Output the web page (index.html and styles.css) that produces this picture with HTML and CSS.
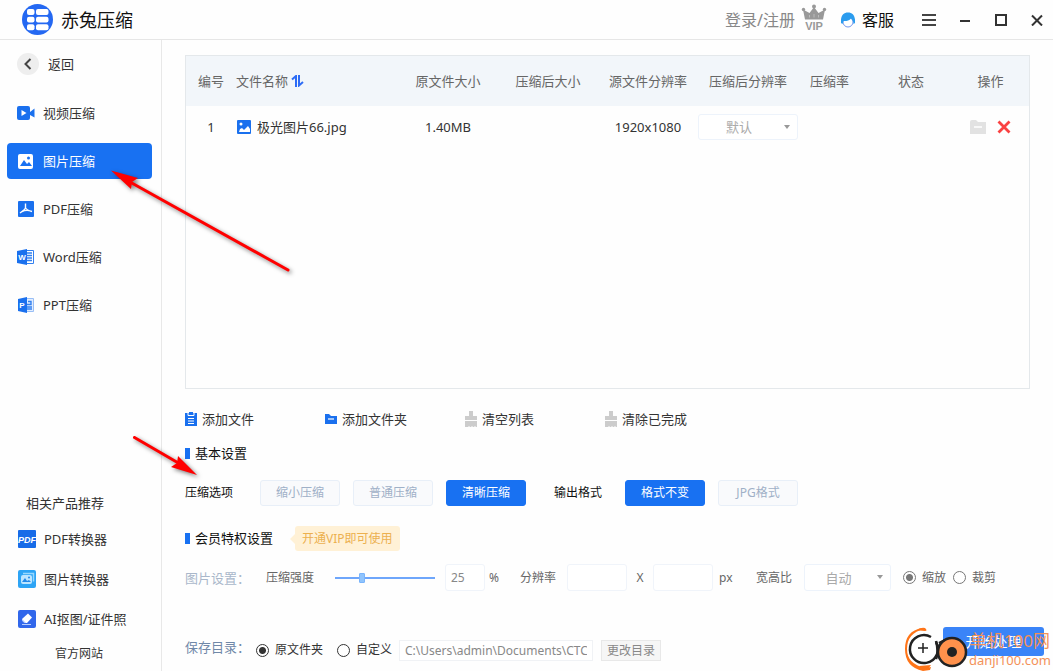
FILE: index.html
```html
<!DOCTYPE html>
<html lang="zh-CN">
<head>
<meta charset="utf-8">
<title>赤兔压缩</title>
<link rel="stylesheet" href="styles.css">
</head>
<body>
<header class="titlebar">
  <svg class="brand-logo" viewBox="0 0 31 31" aria-hidden="true">
    <circle cx="15.500" cy="15.500" r="15.500" fill="#2468f2"/>
    <g fill="#fff"><rect x="5" y="5" width="7.500" height="6" rx="2"/><rect x="14" y="5" width="12.500" height="6" rx="2"/><rect x="5" y="12.800" width="7.500" height="5.700" rx="2"/><rect x="14" y="12.800" width="12.500" height="5.700" rx="2"/><rect x="5" y="20.300" width="7.500" height="6" rx="2"/><rect x="14" y="20.300" width="12.500" height="6" rx="2"/></g>
  </svg>
  <h1 class="brand-name">赤兔压缩</h1>
  <a class="login" href="#">登录/注册</a>
  <svg class="vip-crown" viewBox="0 0 26 26" aria-label="VIP">
    <path d="M2 5.500 4 15.500H22L24 5.500 17.500 9 13 3 8.500 9Z" fill="#999"/>
    <circle cx="13" cy="2.500" r="2" fill="#999"/><circle cx="2.500" cy="5.500" r="1.700" fill="#999"/><circle cx="23.500" cy="5.500" r="1.700" fill="#999"/>
    <path d="M8.500 13.500V11M13 13.500V10M17.500 13.500V11" stroke="#bbb"/>
    <text x="13" y="26" text-anchor="middle" class="vip-text">VIP</text>
  </svg>
  <a class="service" href="#">
    <svg viewBox="0 0 16 16" width="16" height="16" aria-hidden="true"><circle cx="8" cy="10" r="5" fill="#fff" stroke="#7396ed"/><path d="M1 11V7.500C1.500 3 4 .5 8 .5s6.500 2.500 7 7V11l-1.500 1C13.500 9.500 12.500 8 11 6.500 9 9.500 5 9 3.500 9L2.500 12Z" fill="#2b9cee"/></svg>
    客服
  </a>
  <button class="win win-menu" aria-label="菜单"><svg viewBox="0 0 16 14" width="16" height="14"><path d="M1 2H15M1 7H15M1 12H15" stroke="#444" stroke-width="2"/></svg></button>
  <button class="win" aria-label="最小化"><svg viewBox="0 0 12 12" width="12" height="12"><path d="M1 7H11" stroke="#333" stroke-width="2"/></svg></button>
  <button class="win" aria-label="最大化"><svg viewBox="0 0 12 12" width="12" height="12"><path d="M1 1H11V11H1Z" fill="none" stroke="#333" stroke-width="2"/></svg></button>
  <button class="win" aria-label="关闭"><svg viewBox="0 0 12 12" width="12" height="12"><path d="M1 1.500 11 11.500M11 1.500 1 11.500" stroke="#333" stroke-width="2"/></svg></button>
</header>

<div class="body">
  <aside class="sidebar">
    <button class="back"><svg viewBox="0 0 22 22" width="22" height="22"><circle cx="11" cy="11" r="11" fill="#eee"/><path d="m13.500 6-5 5 5 5" fill="none" stroke="#444" stroke-width="2"/></svg>返回</button>
    <nav class="menu">
      <a class="menu-item" href="#"><svg viewBox="0 0 18 18" width="18" height="18"><rect y="2" width="13" height="14" rx="2" fill="#1a70ee"/><path d="m13 8 4.500-3.500v9L13 11Z" fill="#1a70ee"/><path d="m4.500 6 5 3-5 3Z" fill="#fff"/></svg>视频压缩</a>
      <a class="menu-item active" href="#"><svg viewBox="0 0 18 18" width="18" height="18"><rect x="1" y="2" width="15" height="15" rx="2" fill="#fff"/><path d="m3 14 4-6 3 4 2-2 3 4Z" fill="#1871f2"/><circle cx="11.500" cy="6" r="1.500" fill="#1871f2"/></svg>图片压缩</a>
      <a class="menu-item" href="#"><svg viewBox="0 0 18 18" width="18" height="18"><rect x="1" y="1" width="16" height="16" rx="1" fill="#1a70ee"/><path d="M8.500 3.500v4q0 2-5.500 5.500M8.500 8q1 2 6.500 3.500M5 11.500q3-1.500 7-1" fill="none" stroke="#fff" stroke-width="1.400"/></svg>PDF压缩</a>
      <a class="menu-item" href="#"><svg viewBox="0 0 18 18" width="18" height="18"><path d="M9 2.500h7.500v13H9" fill="#fff" stroke="#3380ef"/><path d="M10 5h5M10 7.500h5M10 10h5M10 12.500h5" stroke="#3380ef" stroke-width="1.300"/><path d="m0 3 10-2v16L0 15Z" fill="#1a70ee"/><text x="5" y="12" text-anchor="middle" class="doc-letter">W</text></svg>Word压缩</a>
      <a class="menu-item" href="#"><svg viewBox="0 0 18 18" width="18" height="18"><path d="M9 2.500h7.500v13H9" fill="#e1edff" stroke="#99bef5"/><path d="M11 5.500h3v3h-4M10 11h5M10 13h5" fill="none" stroke="#3380ef" stroke-width="1.400"/><path d="m1 3 9-2v16l-9-2Z" fill="#1a70ee"/><text x="5" y="12" text-anchor="middle" class="doc-letter">P</text></svg>PPT压缩</a>
    </nav>
    <section class="related">
      <h2>相关产品推荐</h2>
      <a href="#"><svg viewBox="0 0 18 18" width="18" height="18"><rect width="18" height="18" rx="1" fill="#176be8"/><text x="9" y="13" text-anchor="middle" class="pdf-letter">PDF</text></svg>PDF转换器</a>
      <a href="#"><svg viewBox="0 0 18 18" width="18" height="18"><rect width="18" height="18" rx="2" fill="#2da4f5"/><path d="M5 3.500h10.500v8" fill="none" stroke="#98d8ff" stroke-width="1.500"/><rect x="3" y="5" width="11" height="9" rx="2" fill="#bce5ff"/><path d="m4 12 3-4 2 3 2-1 2 2Z" fill="#2389e8"/><circle cx="11" cy="7.500" r="1" fill="#2389e8"/></svg>图片转换器</a>
      <a href="#"><svg viewBox="0 0 18 18" width="18" height="18"><rect width="18" height="18" rx="2" fill="#3167eb"/><path d="m4 9 6-5.500 4 4L9 13H6.500L4 10.500Z" fill="#fff"/><path d="m4 9 4 4H6.500L4 10.500Z" fill="#a9c5ff"/><path d="M4 14.500h9" stroke="#b8cefd"/></svg>AI抠图/证件照</a>
      <a class="website" href="#">官方网站</a>
    </section>
  </aside>

  <main class="main">
    <div class="file-box">
      <table class="files">
        <colgroup><col class="c-no"><col><col class="c-mid"><col class="c-mid"><col class="c-mid"><col class="c-mid"><col class="c-rate"><col class="c-mid"><col class="c-act"></colgroup>
        <thead><tr><th>编号</th><th class="name">文件名称 <svg viewBox="0 0 13 12" width="13" height="12"><path d="M1 4.500 5 1V12M8 0V10.500L12 7" fill="none" stroke="#2d6cf6" stroke-width="2"/></svg></th><th>原文件大小</th><th>压缩后大小</th><th>源文件分辨率</th><th>压缩后分辨率</th><th>压缩率</th><th>状态</th><th class="actions">操作</th></tr></thead>
        <tbody><tr><td>1</td><td class="name"><span class="file-name"><svg viewBox="0 0 16 16" width="16" height="16"><rect x="1" y="1" width="14" height="14" rx="1" fill="#1a70ee"/><path d="m3 13 1-3 2-1 2 2 4-4 2 3v3Z" fill="#fff"/><circle cx="5" cy="5" r="1.500" fill="#fff"/></svg>极光图片66.jpg</span></td><td>1.40MB</td><td></td><td>1920x1080</td><td><span class="select"><select aria-label="压缩后分辨率"><option>默认</option></select></span></td><td></td><td></td>
          <td class="actions"><span class="action-list"><button aria-label="打开文件夹"><svg viewBox="0 0 16 16" width="16" height="16"><path d="M0 3q0-2 2-2h4l2 2h8v12H0Z" fill="#e2e2e2"/><path d="M4 8h8" stroke="#fff" stroke-width="1.500"/></svg></button><button aria-label="删除"><svg viewBox="0 0 14 14" width="14" height="14"><path d="m1.500 1.500 11 11M12.500 1.500l-11 11" stroke="#fa4141" stroke-width="2.800"/></svg></button></span></td></tr></tbody>
      </table>
    </div>

    <div class="toolbar">
      <button><svg viewBox="0 0 12 14" width="12" height="14"><path d="M0 1h12v13H0Z" fill="#1a70ee"/><path d="M3 1v2.500h6V1" fill="none" stroke="#fff"/><path d="M4 0h4v2.500H4Z" fill="#1a70ee"/><path d="M3 6.500h6M3 9h6M3 11.500h6" stroke="#fff"/></svg>添加文件</button>
      <button><svg viewBox="0 0 12 14" width="12" height="14"><path d="M0 2h4l2 2h6v8H0Z" fill="#1a70ee"/><path d="M3 7h6" stroke="#fff" stroke-width="1.200"/></svg>添加文件夹</button>
      <button><svg viewBox="0 0 12 16" width="12" height="16"><path d="M4 0h4v5h4v4H0V5h4ZM0 10h12v6h-1l-1-1-1 1H8l-1-1-1 1H5l-1-1-1 1H0Z" fill="#ccc"/></svg>清空列表</button>
      <button><svg viewBox="0 0 12 16" width="12" height="16"><path d="M4 0h4v5h4v4H0V5h4ZM0 10h12v6h-1l-1-1-1 1H8l-1-1-1 1H5l-1-1-1 1H0Z" fill="#ccc"/></svg>清除已完成</button>
    </div>

    <h2 class="section-title">基本设置</h2>
    <div class="options">
      <span class="option-label">压缩选项</span>
      <div class="choices"><button class="choice">缩小压缩</button><button class="choice">普通压缩</button><button class="choice on">清晰压缩</button></div>
      <span class="option-label format-label">输出格式</span>
      <div class="choices"><button class="choice on">格式不变</button><button class="choice">JPG格式</button></div>
    </div>

    <div class="vip-heading"><h2 class="section-title">会员特权设置</h2><a class="vip-tip" href="#">开通VIP即可使用</a></div>
    <div class="settings">
      <span class="row-label faded">图片设置：</span>
      <label class="strength" for="strength">压缩强度</label>
      <input class="slider" id="strength" type="range" min="0" max="100" value="25">
      <input class="box percent" type="text" value="25" aria-label="压缩强度百分比"><span class="unit">%</span>
      <label class="resolution" for="res-w">分辨率</label>
      <input class="box size" id="res-w" type="text"><span class="times">X</span>
      <input class="box size" type="text" aria-label="高度"><span class="unit">px</span>
      <label class="ratio" for="ratio">宽高比</label>
      <span class="select ratio-select"><select id="ratio"><option>自动</option></select></span>
      <div class="radios"><label><input type="radio" name="fit" checked>缩放</label><label><input type="radio" name="fit">裁剪</label></div>
    </div>

    <div class="save">
      <span class="row-label">保存目录：</span>
      <div class="radios save-radios"><label><input type="radio" name="dir" checked>原文件夹</label><label><input type="radio" name="dir">自定义</label></div>
      <input class="path" type="text" value="C:\Users\admin\Documents\CTCompress" aria-label="保存目录" readonly>
      <button class="change">更改目录</button>
      <button class="start">开始处理</button>
    </div>
  </main>
</div>

<svg class="pointer pointer-menu" viewBox="0 0 200 120" aria-hidden="true"><path d="M30 22 188 110" stroke="red" stroke-width="3" stroke-linecap="round"/><path d="m11 10.500 27 7.500-6 4-1 7Z" fill="red"/></svg>
<svg class="pointer pointer-options" viewBox="0 0 90 60" aria-hidden="true"><path d="m14.500 12.500 43 25" stroke="red" stroke-width="3" stroke-linecap="round"/><path d="m77 50-26-8 6-4 1-7Z" fill="red"/></svg>
<div class="watermark">
  <svg viewBox="0 0 64 44" width="64" height="44" aria-hidden="true">
    <path d="M19 2Q2 6 2 22q0 15 18 19l6-1-1 3-7 1Q0 40 0 22 0 4 17 1Z" fill="#ff7417"/><path d="M11 4q4-4 9-3 3 3 0 3-6-1-9 0M14 39q4 5 9 3l3-4Z" fill="#ff7417"/>
    <circle cx="18" cy="21" r="14" fill="#fff"/><path d="M26 10A14 14 0 1 0 31 15" fill="none" stroke="#222" stroke-width="2.500"/><path d="M18 16v10M13 21h10" stroke="#222" stroke-width="1.500"/>
    <circle cx="47" cy="25" r="14" fill="#ff914c" stroke="#222" stroke-width="2.500"/><circle cx="47" cy="25" r="5" fill="#222"/><path d="M31 14q3 11 0 18M34 16l6-3" fill="none" stroke="#222" stroke-width="2.500"/>
  </svg>
  <div class="watermark-text"><span class="wm-name">单机100网</span><span class="wm-url">danji100.com</span></div>
</div>
</body>
</html>
```
FILE: styles.css
```css
* { box-sizing: border-box; }
body {
  margin: 0;
  min-height: 100vh;
  display: flex;
  flex-direction: column;
  position: relative;
  overflow-x: hidden;
  background: #fefefe;
  color: #333;
  font: 13px/20px "Noto Sans", "Noto Sans CJK SC", sans-serif;
}
h1, h2 { margin: 0; font-weight: 400; }
a { color: inherit; text-decoration: none; }
button, input, select { font: inherit; color: inherit; margin: 0; }
button { padding: 0; border: 0; background: none; white-space: nowrap; }
svg { flex: none; }

.titlebar { height: 40px; padding: 0 10px 0 22px; display: flex; align-items: center; border-bottom: 1px solid #e6e6e6; }
.brand-logo { width: 31px; height: 31px; }
.brand-name { margin-left: 8px; font-size: 18px; color: #111; }
.login { margin-left: auto; font-size: 16px; color: #888; }
.vip-crown { width: 26px; height: 26px; margin: 0 13px 6px 6px; }
.vip-text { font: 700 11px "Liberation Sans", sans-serif; fill: #999; }
.service { display: flex; align-items: center; gap: 6px; margin-right: 27px; font-size: 16px; color: #111; }
.win { display: flex; margin-left: 24px; }
.win-menu { margin: 0; }
.win-menu + .win { margin-left: 22px; }

.body { flex: 1; display: flex; }
.sidebar { width: 162px; flex: none; padding: 13px 9px 2px 7px; display: flex; flex-direction: column; border-right: 1px solid #e8e8e8; }
.back { display: flex; align-items: center; gap: 9px; margin: 0 0 20px 10px; }
.menu { display: grid; gap: 12px; }
.menu-item { height: 36px; padding-left: 10px; display: flex; align-items: center; gap: 8px; border-radius: 4px; }
.menu-item.active { background: #1871f2; color: #fff; }
.doc-letter { font: 700 8px "Liberation Sans", sans-serif; fill: #fff; }
.pdf-letter { font: italic 700 9px "Liberation Sans", sans-serif; fill: #fff; }
.related { margin-top: auto; padding-left: 11px; }
.related h2 { padding-left: 8px; font-size: 13px; line-height: 32px; }
.related a { height: 40px; display: flex; align-items: center; gap: 8px; }
.related .website { height: 30px; padding-left: 37px; font-size: 12px; }

.main { flex: 1; min-width: 0; padding: 15px 9px 10px 23px; display: flex; flex-direction: column; }
.file-box { flex: 1; margin-right: 14px; border: 1px solid #e4e8eb; }
.files { width: 100%; table-layout: fixed; border-collapse: collapse; text-align: center; }
.c-no { width: 50px; }
.c-mid { width: 100px; }
.c-rate { width: 63px; }
.c-act { width: 68px; }
.files th { height: 50px; padding: 0; background: #f2f6fa; font-weight: 400; color: #666; }
.files td { height: 41px; padding: 0; }
.files .name { text-align: left; }
.files th svg { vertical-align: -1px; }
.file-name { display: flex; align-items: center; gap: 5px; }
.files .actions { padding-right: 9px; }
.action-list { display: flex; justify-content: center; align-items: center; gap: 11px; }
.action-list button { display: flex; }

.select { position: relative; display: block; height: 26px; }
.select select { width: 100%; height: 100%; padding: 0 18px 0 0; appearance: none; border: 1px solid #edf3fb; border-radius: 3px; background: #fff; color: #aaa; text-align: center; text-align-last: center; }
.select::after { content: ""; position: absolute; right: 8px; top: 11px; border: 3px solid transparent; border-top: 4px solid #999; border-bottom: 0; pointer-events: none; }

.toolbar { display: flex; margin-top: 20px; }
.toolbar button { width: 140px; height: 20px; display: flex; align-items: center; gap: 5px; }
.section-title { display: flex; align-items: center; gap: 5px; font-size: 13px; line-height: 20px; color: #111; }
.section-title::before { content: ""; width: 5px; height: 11px; background: #1871f2; }
.toolbar + .section-title { margin-top: 14px; }
.options { display: flex; align-items: center; margin-top: 17px; font-size: 12px; }
.option-label { width: 75px; color: #111; }
.format-label { width: 71px; margin-left: 28px; }
.choices { display: flex; gap: 13px; }
.choice { width: 80px; height: 26px; border: 1px solid #e8eff8; border-radius: 3px; background: #f9fafc; color: #9fb0c7; }
.choice.on { background: #1871f2; border-color: #1871f2; color: #fff; }
.vip-heading { display: flex; align-items: center; gap: 22px; margin-top: 19px; height: 26px; }
.vip-tip { position: relative; padding: 0 7px; border-radius: 3px; background: #fff1d6; color: #ecb04f; font-size: 12px; line-height: 25px; }
.vip-tip::before { content: ""; position: absolute; left: -5px; top: 8px; border: 5px solid transparent; border-right-color: #fff1d6; border-left: 0; }

.settings { display: flex; align-items: center; margin-top: 13px; height: 27px; font-size: 12px; color: #666; white-space: nowrap; }
.row-label { width: 71px; flex: none; font-size: 13px; color: #7088a8; white-space: nowrap; }
.row-label.faded { width: 81px; color: #a9b7ca; }
.strength { width: 69px; }
.slider { width: 100px; height: 10px; appearance: none; background: linear-gradient(#6ea6fb, #6ea6fb) center / 100% 2px no-repeat; }
.slider::-webkit-slider-thumb { appearance: none; width: 6px; height: 10px; border-radius: 1px; background: #8fc4fd; border: 1px solid #7ab4fb; }
.box { height: 27px; padding: 0 5px; border: 1px solid #f0f4fa; border-radius: 3px; background: #fff; color: #888; font-size: 12px; }
.percent { width: 40px; margin-left: 10px; }
.size { width: 60px; }
.unit { width: 31px; padding-left: 4px; }
.resolution { width: 51px; padding-left: 4px; }
.times { width: 26px; text-align: center; }
.size + .unit { width: 43px; padding-left: 6px; }
.ratio { width: 48px; }
.ratio-select { width: 87px; height: 27px; font-size: 13px; }
.radios { display: flex; gap: 7px; margin-left: 12px; }
.radios label { display: flex; align-items: center; gap: 6px; }
.radios input { appearance: none; width: 13px; height: 13px; border: 1px solid #777; border-radius: 50%; background: #fff; }
.radios input:checked { background: radial-gradient(circle, #777 3px, transparent 4px); }

.save { display: flex; align-items: flex-end; margin-top: 36px; height: 34px; font-size: 12px; }
.save .row-label { line-height: 28px; }
.save-radios { gap: 14px; margin: 0; }
.save-radios label { line-height: 22px; }
.save-radios input { border-color: #333; }
.save-radios input:checked { background: radial-gradient(circle, #333 3px, transparent 4px); }
.path { width: 194px; height: 21px; margin-left: 7px; padding: 0 5px; border: 1px solid #f0f2f5; background: #fff; color: #888; font-size: 12px; line-height: 19px; }
.change { width: 60px; height: 21px; margin-left: 8px; border: 1px solid #e8e8e8; background: #f6f6f6; color: #888; }
.start { width: 101px; height: 29px; margin-left: auto; align-self: flex-start; border-radius: 3px; background: #3a84f8; color: #fff; font-size: 14px; }

.pointer { position: absolute; pointer-events: none; filter: drop-shadow(2px 2px 2px rgba(0, 0, 0, .5)); }
.pointer-menu { left: 100px; top: 160px; width: 200px; height: 120px; }
.pointer-options { left: 120px; top: 425px; width: 90px; height: 60px; }
.watermark { position: absolute; right: 2px; bottom: 0; display: flex; align-items: center; pointer-events: none; color: #f39159; }
.watermark-text { display: flex; flex-direction: column; align-items: center; }
.wm-name { font-size: 17px; line-height: 22px; }
.wm-url { font-size: 13px; line-height: 16px; }
```
